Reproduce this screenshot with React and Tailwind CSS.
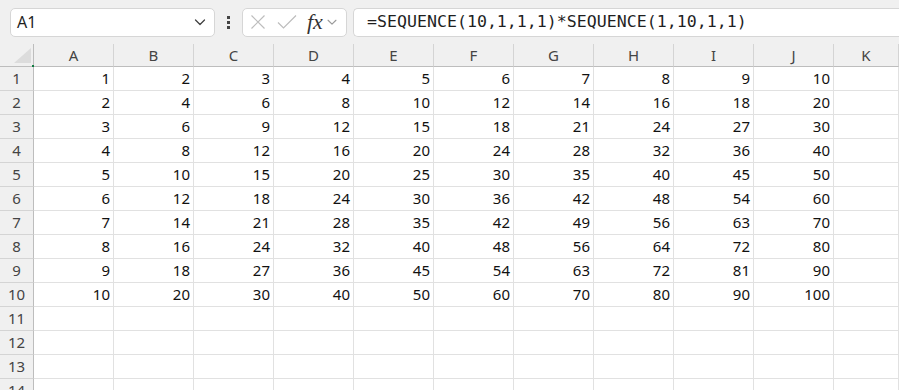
import React from 'react';

const cols = ['A', 'B', 'C', 'D', 'E', 'F', 'G', 'H', 'I', 'J', 'K'];
const rows = Array.from({ length: 14 }, (_, i) => i + 1);

const Chevron = ({ className }) => (
  <svg viewBox="0 0 16 16" className={className} fill="none" stroke="currentColor" strokeWidth="1.3" strokeLinecap="round" strokeLinejoin="round">
    <path d="M3.5 6l4.5 4.5L12.5 6" />
  </svg>
);

const Toolbar = () => (
  <div className="flex h-[44px] items-center bg-[#f0f0f0] pl-[10px]">
    <div className="flex h-[29px] w-[205px] items-center justify-between rounded-[5px] border border-[#d6d6d6] bg-white pl-[6px] pr-[6px]">
      <span className="text-[16px] text-[#1f1f1f]">A1</span>
      <Chevron className="h-[16px] w-[16px] text-[#424242]" />
    </div>
    <div className="flex w-[27px] flex-col items-center justify-center gap-[2px]">
      <span className="block h-[3px] w-[3px] bg-[#444]"></span>
      <span className="block h-[3px] w-[3px] bg-[#444]"></span>
      <span className="block h-[3px] w-[3px] bg-[#444]"></span>
    </div>
    <div className="flex h-[29px] w-[105px] items-center rounded-[5px] border border-[#d6d6d6] bg-white pl-[7px]">
      <svg viewBox="0 0 16 16" className="h-[16px] w-[16px] text-[#bdbdbd]" fill="none" stroke="currentColor" strokeWidth="1.2">
        <path d="M1.5 1.5l13 13M14.5 1.5l-13 13" />
      </svg>
      <svg viewBox="0 0 20 16" className="ml-[11px] h-[16px] w-[20px] text-[#bdbdbd]" fill="none" stroke="currentColor" strokeWidth="1.2">
        <path d="M1 8.5l5.5 5.5L19 1.5" />
      </svg>
      <span className="ml-[10px] font-['Liberation_Serif',serif] text-[22px] italic leading-none text-[#333]">fx</span>
      <Chevron className="ml-[2px] h-[14px] w-[14px] text-[#9a9a9a]" />
    </div>
    <div className="ml-[6px] flex h-[29px] flex-1 items-center rounded-l-[5px] border border-r-0 border-[#d6d6d6] bg-white pl-[13px]">
      <span className="font-['DejaVu_Sans_Mono',monospace] text-[16.6px] text-[#1f1f1f]">=SEQUENCE(10,1,1,1)*SEQUENCE(1,10,1,1)</span>
    </div>
  </div>
);

const Sheet = () => (
  <div className="grid grid-cols-[34px_repeat(10,80px)_1fr] font-['Noto_Sans',sans-serif] text-[15px]">
    <div className="relative h-[23px] border-b border-r border-b-[#bdbdbd] border-r-[#bdbdbd] bg-[#f0f0f0]">
      <div className="absolute bottom-[3px] right-[2px] h-0 w-0 border-b-[15px] border-l-[17px] border-b-[#dcdcdc] border-l-transparent"></div>
      <div className="absolute -bottom-[1px] -right-[1px] h-[2px] w-[2px] bg-[#107c41]"></div>
    </div>
    {cols.map((c) => (
      <div key={c} className="flex h-[23px] items-center justify-center border-b border-r border-b-[#bdbdbd] border-r-[#d4d4d4] bg-[#f0f0f0] text-[#444]">
        {c}
      </div>
    ))}
    {rows.map((r) => (
      <React.Fragment key={r}>
        <div className="flex h-[24px] items-center justify-center border-b border-r border-b-[#d4d4d4] border-r-[#bdbdbd] bg-[#f0f0f0] text-[#444]">
          {r}
        </div>
        {cols.map((c, ci) => (
          <div key={c} className="flex h-[24px] items-center justify-end border-b border-r border-[#e1e1e1] bg-white pr-[3px] text-[#111]">
            {r <= 10 && ci < 10 ? r * (ci + 1) : ''}
          </div>
        ))}
      </React.Fragment>
    ))}
  </div>
);

export default function App() {
  return (
    <div className="h-[390px] w-full overflow-hidden bg-white font-['Noto_Sans',sans-serif]">
      <Toolbar />
      <Sheet />
    </div>
  );
}
